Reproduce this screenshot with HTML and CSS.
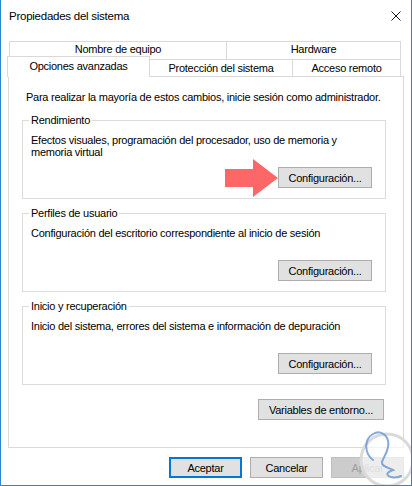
FILE: index.html
```html
<!DOCTYPE html>
<html lang="es">
<head>
	<meta charset="UTF-8">
	<title>Propiedades del sistema</title>
	<link rel="stylesheet" href="styles.css">
</head>
<body>
<div class="window">
	<div class="titlebar">
		<span class="title">Propiedades del sistema</span>
		<svg class="close" width="10" height="10" viewBox="0 0 10 10"><path d="M0.5 0.5 L9.5 9.5 M9.5 0.5 L0.5 9.5" stroke="#1a1a1a" stroke-width="1" fill="none"/></svg>
	</div>

	<div class="tabs">
		<div class="tabrow back">
			<div class="tab nombre">Nombre de equipo</div>
			<div class="tab hardware">Hardware</div>
		</div>
		<div class="tabrow front">
			<div class="tab active">Opciones avanzadas</div>
			<div class="tab proteccion">Protección del sistema</div>
			<div class="tab remoto">Acceso remoto</div>
		</div>
	</div>

	<div class="panel">
		<p class="notice">Para realizar la mayoría de estos cambios, inicie sesión como administrador.</p>

		<fieldset class="group">
			<legend>Rendimiento</legend>
			<p class="desc">Efectos visuales, programación del procesador, uso de memoria y memoria virtual</p>
			<div class="actions">
				<svg class="arrow" width="53" height="38" viewBox="0 0 53 38"><path d="M0 10 H28 V0 L53 19 L28 38 V28 H0 Z" fill="#fe6767"/></svg>
				<button class="btn config">Configuración...</button>
			</div>
		</fieldset>

		<fieldset class="group">
			<legend>Perfiles de usuario</legend>
			<p class="desc">Configuración del escritorio correspondiente al inicio de sesión</p>
			<div class="actions"><button class="btn config">Configuración...</button></div>
		</fieldset>

		<fieldset class="group">
			<legend>Inicio y recuperación</legend>
			<p class="desc">Inicio del sistema, errores del sistema e información de depuración</p>
			<div class="actions"><button class="btn config">Configuración...</button></div>
		</fieldset>

		<div class="actions env"><button class="btn wide">Variables de entorno...</button></div>
	</div>

	<div class="footer">
		<button class="btn primary">Aceptar</button>
		<button class="btn">Cancelar</button>
		<button class="btn" disabled>Aplicar</button>
	</div>

	<svg class="watermark" width="56" height="56" viewBox="0 0 56 56">
		<circle cx="30" cy="30" r="26" fill="rgba(255,255,255,0.65)" stroke="#dadada" stroke-width="3"/>
		<path d="M16 30 C8 24 6 10 16 4 C24 -1 33 6 31 17 C30 24 26 28 25 32 C24 36 32 38 36 40 C30 42 28 45 34 47 C38 48 42 47 44 46" fill="none" stroke="#5b8fd0" stroke-width="2" stroke-linecap="round" opacity="0.75"/>
	</svg>
</div>
</body>
</html>
```

FILE: styles.css
```css
body { margin:0; background:#fff; font:11px "Liberation Sans", Arial, sans-serif; letter-spacing:-0.25px; color:#000; }
.window { position:relative; box-sizing:border-box; width:412px; height:486px; border:1px solid #2b87d6; border-top:none; overflow:hidden; background:#fff; }

.titlebar { height:32px; display:flex; align-items:center; justify-content:space-between; padding:0 10px 0 8px; }
.title { font-size:11.5px; }
.close { display:block; }

.tabs { margin-top:9px; }
.tabrow { display:flex; }
.tabrow.back { margin-left:8px; }
.tabrow.front { margin-left:6px; margin-top:-3px; height:20px; align-items:flex-end; }
.tab { box-sizing:border-box; border:1px solid #d9d9d9; border-bottom:none; background:#fff; text-align:center; white-space:nowrap; }
.tab + .tab { margin-left:-1px; }
.back .tab { height:18px; line-height:15px; }
.front .tab { height:17px; line-height:16px; }
.tab.nombre { width:218px; }
.tab.hardware { width:175px; }
.tab.active { width:143px; height:21px; line-height:18px; margin-bottom:-1px; z-index:1; }
.tab.proteccion { width:144px; }
.tab.remoto { width:109px; }

.panel { box-sizing:border-box; margin:0 7px; border:1px solid #d9d9d9; padding:14px 17px 27px 13px; }
.notice { margin:0; padding-left:4px; line-height:13px; }

.group { margin:10px 0 0; padding:0 13px 10px 8px; border:1px solid #dcdcdc; min-width:0; }
.group + .group { margin-top:8px; }
.group legend { padding:0 2px; margin-left:-2px; line-height:13px; }
.desc { margin:7px 0 0; line-height:12px; min-height:24px; }

.actions { position:relative; display:flex; justify-content:flex-end; margin-top:9px; }
.actions.env { margin-top:14px; margin-right:2px; }
.arrow { position:absolute; right:94px; top:-8px; }

.btn { box-sizing:border-box; height:21px; padding:0; border:1px solid #adadad; background:#e1e1e1; font:inherit; letter-spacing:inherit; color:#000; }
.btn.config { width:94px; }
.btn.wide { width:126px; }
.btn.primary { border:2px solid #0078d7; }
.btn:disabled { background:#cccccc; border-color:#bfbfbf; color:#a0a0a0; }

.footer { display:flex; justify-content:flex-end; gap:8px; margin-top:9px; padding-right:7px; }
.footer .btn { width:73px; }

.watermark { position:absolute; left:356px; top:430px; }
```
